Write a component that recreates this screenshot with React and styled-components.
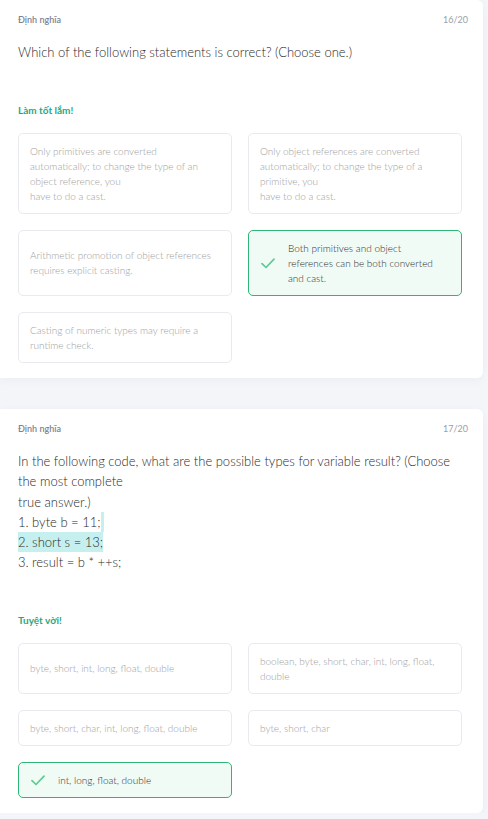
import React from "react";
import styled, { createGlobalStyle } from "styled-components";

const Global = createGlobalStyle`
  html, body { margin: 0; padding: 0; background: #f4f5f9; }
  body { font-family: Lato, "Noto Sans", sans-serif; -webkit-font-smoothing: antialiased; }
`;

const Page = styled.div`
  width: 483px;
  display: flex;
  flex-direction: column;
  gap: 31px;
`;

const Card = styled.section`
  background: #fff;
  border-radius: 0 6px 6px 0;
  box-shadow: 0 2px 10px rgba(30, 40, 80, 0.04);
  padding: 14px 15px 15px 18px;
`;

const Header = styled.div`
  display: flex;
  justify-content: space-between;
  align-items: center;
  height: 12px;
  font-size: 9px;
  line-height: 12px;
`;

const Category = styled.span`
  color: #7d8290;
  font-weight: 600;
`;

const Counter = styled.span`
  color: #9a9ea9;
`;

const Question = styled.div`
  margin-top: 16px;
  font-size: 13px;
  line-height: 20.2px;
  font-weight: 300;
  color: #2a2a2a;
`;

const Line = styled.div`
  white-space: nowrap;
`;

const Mark = styled.span`
  background: #c5f0ef;
  display: inline-block;
  width: ${(p) => (p.$w ? p.$w + "px" : "auto")};
`;

const Feedback = styled.div`
  margin-top: 41px;
  font-size: 10px;
  line-height: 14px;
  font-weight: 700;
  color: #1fa882;
`;

const Grid = styled.div`
  margin-top: 16px;
  display: grid;
  grid-template-columns: 214px 214px;
  column-gap: 16px;
  row-gap: 16px;
`;

const Option = styled.div`
  box-sizing: border-box;
  display: flex;
  align-items: center;
  gap: 13px;
  padding: 9.5px ${(p) => (p.$correct ? "12px" : "11px")};
  border: 1px solid ${(p) => (p.$correct ? "#2fb576" : "#e9eaf0")};
  border-radius: 5px;
  background: ${(p) => (p.$correct ? "#f1fbf6" : "#fff")};
  color: ${(p) => (p.$correct ? "#2f2f2f" : "#9e9e9e")};
  font-size: 10px;
  line-height: 15px;
  font-weight: 300;
`;

const OptionText = styled.div`
  white-space: nowrap;
`;

const Check = () => (
  <svg width="14" height="11" viewBox="0 0 14 11" fill="none" style={{ flex: "none" }}>
    <path d="M1 5.6 L5 9.5 L13 1.2" stroke="#5ccb94" strokeWidth="1.7" strokeLinecap="round" strokeLinejoin="round" />
  </svg>
);

const Opt = ({ correct, lines }) => (
  <Option $correct={correct}>
    {correct && <Check />}
    <OptionText>
      {lines.map((l, i) => (
        <div key={i}>{l}</div>
      ))}
    </OptionText>
  </Option>
);

export default function App() {
  return (
    <>
      <Global />
      <Page>
        <Card>
          <Header>
            <Category>Định nghĩa</Category>
            <Counter>16/20</Counter>
          </Header>
          <Question>
            <Line>Which of the following statements is correct? (Choose one.)</Line>
          </Question>
          <Feedback>Làm tốt lắm!</Feedback>
          <Grid>
            <Opt
              lines={[
                "Only primitives are converted",
                "automatically; to change the type of an",
                "object reference, you",
                "have to do a cast.",
              ]}
            />
            <Opt
              lines={[
                "Only object references are converted",
                "automatically; to change the type of a",
                "primitive, you",
                "have to do a cast.",
              ]}
            />
            <Opt lines={["Arithmetic promotion of object references", "requires explicit casting."]} />
            <Opt
              correct
              lines={["Both primitives and object", "references can be both converted", "and cast."]}
            />
            <Opt lines={["Casting of numeric types may require a", "runtime check."]} />
          </Grid>
        </Card>
        <Card>
          <Header>
            <Category>Định nghĩa</Category>
            <Counter>17/20</Counter>
          </Header>
          <Question>
            <Line>In the following code, what are the possible types for variable result? (Choose</Line>
            <Line>the most complete</Line>
            <Line>true answer.)</Line>
            <Line>
              1. byte b = 11;<Mark $w={3}>&nbsp;</Mark>
            </Line>
            <Line>
              <Mark>2. short s = 13;</Mark>
            </Line>
            <Line>3. result = b * ++s;</Line>
          </Question>
          <Feedback>Tuyệt vời!</Feedback>
          <Grid>
            <Opt lines={["byte, short, int, long, float, double"]} />
            <Opt lines={["boolean, byte, short, char, int, long, float,", "double"]} />
            <Opt lines={["byte, short, char, int, long, float, double"]} />
            <Opt lines={["byte, short, char"]} />
            <Opt correct lines={["int, long, float, double"]} />
          </Grid>
        </Card>
      </Page>
    </>
  );
}
